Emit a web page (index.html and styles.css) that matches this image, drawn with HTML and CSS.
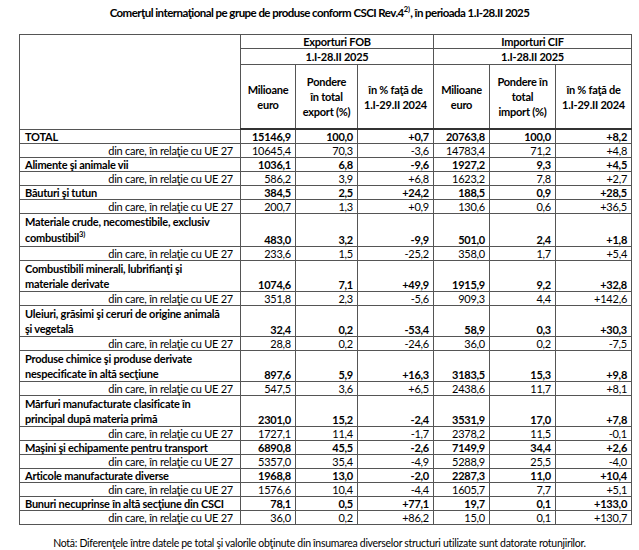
FILE: index.html
```html
<!DOCTYPE html>
<html lang="ro">
<head>
<meta charset="utf-8">
<title>Comerțul internațional pe grupe de produse</title>
<link rel="stylesheet" href="styles.css">
</head>
<body>
<div class="page">
  <h1 class="title">Comerţul internaţional pe grupe de produse conform CSCI Rev.4<sup>2)</sup>, în perioada 1.I-28.II 2025</h1>
  <table class="data">
    <colgroup>
      <col class="c-label"><col class="c-mil"><col class="c-pon"><col class="c-pct"><col class="c-mil2"><col class="c-pon2"><col class="c-pct2">
    </colgroup>
    <thead>
      <tr class="h1">
        <th rowspan="3" class="blank"></th>
        <th colspan="3">Exporturi FOB</th>
        <th colspan="3">Importuri CIF</th>
      </tr>
      <tr class="h2">
        <th colspan="3">1.I-28.II 2025</th>
        <th colspan="3">1.I-28.II 2025</th>
      </tr>
      <tr class="h3">
        <th>Milioane<br>euro</th>
        <th>Pondere<br>în total<br>export (%)</th>
        <th>în % faţă de<br>1.I-29.II 2024</th>
        <th>Milioane<br>euro</th>
        <th>Pondere în<br>total<br>import (%)</th>
        <th>în % faţă de<br>1.I-29.II 2024</th>
      </tr>
    </thead>
    <tbody>
      <tr class="main"><td class="lbl">TOTAL</td><td>15146,9</td><td>100,0</td><td>+0,7</td><td>20763,8</td><td>100,0</td><td>+8,2</td></tr>
      <tr class="sub"><td class="lbl">din care, în relaţie cu UE 27</td><td>10645,4</td><td>70,3</td><td>-3,6</td><td>14783,4</td><td>71,2</td><td>+4,8</td></tr>
      <tr class="main"><td class="lbl">Alimente şi animale vii</td><td>1036,1</td><td>6,8</td><td>-9,6</td><td>1927,2</td><td>9,3</td><td>+4,5</td></tr>
      <tr class="sub"><td class="lbl">din care, în relaţie cu UE 27</td><td>586,2</td><td>3,9</td><td>+6,8</td><td>1623,2</td><td>7,8</td><td>+2,7</td></tr>
      <tr class="main"><td class="lbl">Băuturi şi tutun</td><td>384,5</td><td>2,5</td><td>+24,2</td><td>188,5</td><td>0,9</td><td>+28,5</td></tr>
      <tr class="sub"><td class="lbl">din care, în relaţie cu UE 27</td><td>200,7</td><td>1,3</td><td>+0,9</td><td>130,6</td><td>0,6</td><td>+36,5</td></tr>
      <tr class="main two with-sup"><td class="lbl">Materiale crude, necomestibile, exclusiv<br>combustibil<sup>3)</sup></td><td>483,0</td><td>3,2</td><td>-9,9</td><td>501,0</td><td>2,4</td><td>+1,8</td></tr>
      <tr class="sub"><td class="lbl">din care, în relaţie cu UE 27</td><td>233,6</td><td>1,5</td><td>-25,2</td><td>358,0</td><td>1,7</td><td>+5,4</td></tr>
      <tr class="main two"><td class="lbl">Combustibili minerali, lubrifianţi şi<br>materiale derivate</td><td>1074,6</td><td>7,1</td><td>+49,9</td><td>1915,9</td><td>9,2</td><td>+32,8</td></tr>
      <tr class="sub"><td class="lbl">din care, în relaţie cu UE 27</td><td>351,8</td><td>2,3</td><td>-5,6</td><td>909,3</td><td>4,4</td><td>+142,6</td></tr>
      <tr class="main two"><td class="lbl">Uleiuri, grăsimi şi ceruri de origine animală<br>şi vegetală</td><td>32,4</td><td>0,2</td><td>-53,4</td><td>58,9</td><td>0,3</td><td>+30,3</td></tr>
      <tr class="sub"><td class="lbl">din care, în relaţie cu UE 27</td><td>28,8</td><td>0,2</td><td>-24,6</td><td>36,0</td><td>0,2</td><td>-7,5</td></tr>
      <tr class="main two"><td class="lbl">Produse chimice şi produse derivate<br>nespecificate în altă secţiune</td><td>897,6</td><td>5,9</td><td>+16,3</td><td>3183,5</td><td>15,3</td><td>+9,8</td></tr>
      <tr class="sub"><td class="lbl">din care, în relaţie cu UE 27</td><td>547,5</td><td>3,6</td><td>+6,5</td><td>2438,6</td><td>11,7</td><td>+8,1</td></tr>
      <tr class="main two"><td class="lbl">Mărfuri manufacturate clasificate în<br>principal după materia primă</td><td>2301,0</td><td>15,2</td><td>-2,4</td><td>3531,9</td><td>17,0</td><td>+7,8</td></tr>
      <tr class="sub"><td class="lbl">din care, în relaţie cu UE 27</td><td>1727,1</td><td>11,4</td><td>-1,7</td><td>2378,2</td><td>11,5</td><td>-0,1</td></tr>
      <tr class="main"><td class="lbl">Maşini şi echipamente pentru transport</td><td>6890,8</td><td>45,5</td><td>-2,6</td><td>7149,9</td><td>34,4</td><td>+2,6</td></tr>
      <tr class="sub"><td class="lbl">din care, în relaţie cu UE 27</td><td>5357,0</td><td>35,4</td><td>-4,9</td><td>5288,9</td><td>25,5</td><td>-4,0</td></tr>
      <tr class="main"><td class="lbl">Articole manufacturate diverse</td><td>1968,8</td><td>13,0</td><td>-2,0</td><td>2287,3</td><td>11,0</td><td>+10,4</td></tr>
      <tr class="sub"><td class="lbl">din care, în relaţie cu UE 27</td><td>1576,6</td><td>10,4</td><td>-4,4</td><td>1605,7</td><td>7,7</td><td>+5,1</td></tr>
      <tr class="main"><td class="lbl">Bunuri necuprinse în altă secţiune din CSCI</td><td>78,1</td><td>0,5</td><td>+77,1</td><td>19,7</td><td>0,1</td><td>+133,0</td></tr>
      <tr class="sub"><td class="lbl">din care, în relaţie cu UE 27</td><td>36,0</td><td>0,2</td><td>+86,2</td><td>15,0</td><td>0,1</td><td>+130,7</td></tr>
    </tbody>
  </table>
  <p class="note">Notă: Diferenţele între datele pe total şi valorile obţinute din însumarea diverselor structuri utilizate sunt datorate rotunjirilor.</p>
</div>
</body>
</html>
```

FILE: styles.css
```css
html, body {
  margin: 0;
  padding: 0;
  background: #ffffff;
}

body {
  font-family: Lato, "Open Sans", "Liberation Sans", sans-serif;
  color: #000;
}

.page {
  width: 639px;
  padding: 5px 0 0 0;
}

.title {
  margin: 0;
  font-size: 11.5px;
  letter-spacing: -0.55px;
  line-height: 16px;
  font-weight: 700;
  text-align: center;
  height: 29px;
}

.title sup,
.lbl sup {
  font-size: 7.5px;
  line-height: 0;
  vertical-align: 5px;
  letter-spacing: 0;
}

.data {
  margin-left: 19px;
  width: 612px;
  border-collapse: collapse;
  table-layout: fixed;
  font-size: 11px;
  letter-spacing: -0.25px;
}

.c-label { width: 221px; }
.c-mil { width: 55px; }
.c-pon { width: 62px; }
.c-pct { width: 76px; }
.c-mil2 { width: 56px; }
.c-pon2 { width: 66px; }
.c-pct2 { width: 76px; }

.data th,
.data td {
  border: 1px solid #555;
  padding: 0 4px 0 4px;
}

.data th {
  font-weight: 700;
  text-align: center;
  line-height: 15px;
}

.h1 th { height: 13px; line-height: 13px; }
.h2 th { height: 15px; line-height: 15px; }
.h3 th { height: 63px; vertical-align: middle; border-bottom: 2px solid #333; }

.data td {
  text-align: right;
  line-height: 13px;
  height: 13px;
  vertical-align: bottom;
  white-space: nowrap;
}

.main td { font-weight: 700; }
.main td.lbl { text-align: left; padding-left: 5px; }
.sub td.lbl { text-align: right; padding-right: 7px; }

.two td {
  height: 30px;
}
.two td.lbl {
  line-height: 15px;
}
.with-sup td {
  height: 31px;
}
.with-sup td.lbl {
  line-height: 16px;
}

.note {
  margin: 12px 0 0 0;
  font-size: 10.5px;
  letter-spacing: -0.3px;
  line-height: 13px;
  text-align: center;
}
```
